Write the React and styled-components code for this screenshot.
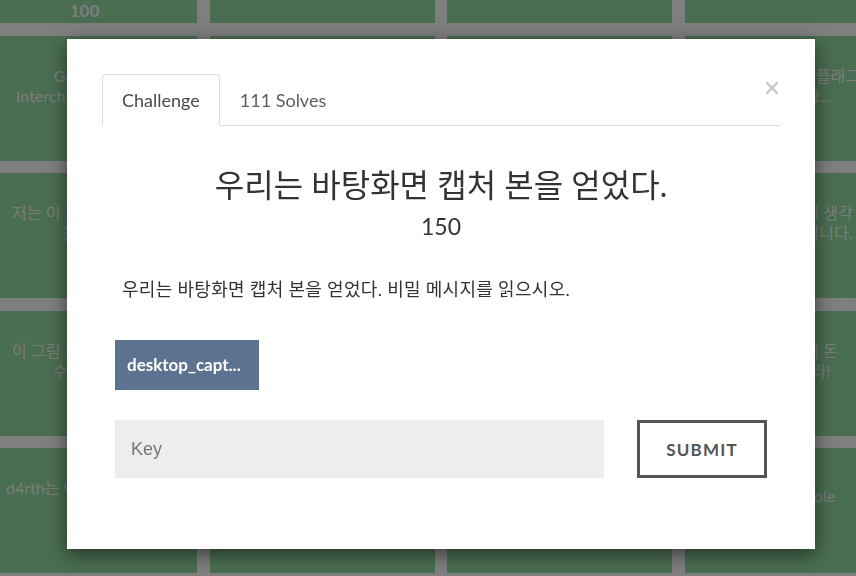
import React from 'react'
import styled, { createGlobalStyle } from 'styled-components'

const GlobalStyle = createGlobalStyle`
  html, body {
    margin: 0;
    padding: 0;
  }
  body {
    width: 856px;
    height: 576px;
    overflow: hidden;
    background: #7f7f7f;
    font-family: Lato, 'Noto Sans CJK KR', sans-serif;
  }
`

const Board = styled.div`
  display: grid;
  grid-template-columns: repeat(4, 225px);
  grid-auto-rows: 125px;
  gap: 12.5px;
  margin: -102px 0 0 -28px;
`

const Tile = styled.div`
  box-sizing: border-box;
  display: flex;
  flex-direction: column;
  align-items: center;
  padding: ${p => (p.low ? '38px' : '30px')} 0 2px;
  background: #4a6e51;
  color: #7d7d7d;
  font-size: 16px;
  line-height: 20px;
  text-align: center;
  white-space: nowrap;
  overflow: hidden;
`

const TileValue = styled.span`
  margin-top: auto;
  font-weight: 700;
  font-size: 17px;
`

const Backdrop = styled.div`
  position: fixed;
  inset: 0;
  display: flex;
  align-items: flex-start;
  padding: 39px 0 0 67px;
`

const Modal = styled.div`
  box-sizing: border-box;
  width: 748px;
  height: 510px;
  padding: 35px 35px 0;
  background: #fff;
  box-shadow: 0 5px 18px rgba(0, 0, 0, 0.55);
`

const Nav = styled.div`
  display: flex;
  align-items: flex-start;
  height: 51px;
  border-bottom: 1px solid #dcdcdc;
`

const Tab = styled.div`
  box-sizing: border-box;
  height: 52px;
  padding: 0 19px;
  border: 1px solid ${p => (p.active ? '#dcdcdc' : 'transparent')};
  border-bottom-color: transparent;
  border-radius: 4px 4px 0 0;
  background: ${p => (p.active ? '#fff' : 'transparent')};
  color: ${p => (p.active ? '#4a4a4a' : '#5e5e5e')};
  font-size: 18px;
  line-height: 50px;
  cursor: pointer;
`

const Close = styled.button`
  margin: 8px 2px 0 auto;
  padding: 0;
  border: none;
  background: none;
  width: 12px;
  height: 12px;
  display: flex;
  cursor: pointer;
`

const Body = styled.div`
  padding: 0 13px;
`

const Title = styled.h3`
  margin: 40px 0 0;
  color: #333;
  font-size: 32px;
  font-weight: 400;
  line-height: 38px;
  text-align: center;
`

const Points = styled.h4`
  margin: 8px 0 0;
  color: #333;
  font-size: 23px;
  font-weight: 400;
  line-height: 28px;
  text-align: center;
`

const Description = styled.p`
  margin: 38px 0 0;
  padding-left: 7px;
  color: #333;
  font-size: 18px;
  line-height: 22px;
  letter-spacing: 0.3px;
`

const FileButton = styled.a`
  box-sizing: border-box;
  display: block;
  width: 144px;
  height: 50px;
  margin-top: 40px;
  padding-left: 12px;
  background: #5c7290;
  color: #fff;
  font-size: 17px;
  font-weight: 700;
  line-height: 50px;
  text-decoration: none;
`

const SubmitRow = styled.form`
  display: flex;
  gap: 33px;
  margin-top: 30px;
`

const KeyInput = styled.input`
  box-sizing: border-box;
  width: 489px;
  height: 58px;
  padding: 0 16px;
  border: none;
  background: #ededed;
  font-family: 'Liberation Sans', Arial, sans-serif;
  font-size: 18px;
  color: #333;
  outline: none;
  &::placeholder {
    color: #777;
  }
`

const SubmitButton = styled.button`
  box-sizing: border-box;
  width: 130px;
  height: 58px;
  border: 3px solid #555;
  background: #fff;
  color: #555;
  font-family: Lato, sans-serif;
  font-size: 17px;
  font-weight: 700;
  letter-spacing: 1.2px;
  text-transform: uppercase;
  cursor: pointer;
`

const tiles = [
  { value: 100 },
  {},
  {},
  {},
  { lines: ['Graphics', 'Interchange Format'] },
  { lines: ['숨겨진 메시지', '찾기'] },
  { lines: ['로그 분석', '기초'] },
  { lines: ['비밀 파일의 플래그', '찾으세요...'] },
  { lines: ['저는 이 문제를 만들며', '울었다'] },
  { lines: ['패킷을 분석하라'] },
  { lines: ['메모리 덤프'] },
  { lines: ['나는 이렇게 생각', '중요한 것입니다.'] },
  { lines: ['이 그림 속에 숨어있는', '수상한 것'] },
  { lines: ['압축 파일'] },
  { lines: ['USB 기록'] },
  { lines: ['돈을 위해 돈', '을 벌어라!'] },
  { lines: ['d4rth는 어디에 있을까?'] },
  { lines: ['웹 콘솔'] },
  { lines: ['레지스트리'] },
  { lines: ['JS Console'], low: true },
]

const App = () => {
  return (
    <>
      <GlobalStyle />
      <Board>
        {tiles.map((t, i) => (
          <Tile key={i} low={t.low}>
            {(t.lines || []).map((l, j) => (
              <div key={j}>{l}</div>
            ))}
            {t.value && <TileValue>{t.value}</TileValue>}
          </Tile>
        ))}
      </Board>

      <Backdrop>
        <Modal>
          <Nav>
            <Tab active>Challenge</Tab>
            <Tab>111 Solves</Tab>
            <Close aria-label="Close">
              <svg width="12" height="12" viewBox="0 0 12 12">
                <path
                  d="M1 1L11 11M11 1L1 11"
                  stroke="#c8c8c8"
                  strokeWidth="2.4"
                  strokeLinecap="round"
                />
              </svg>
            </Close>
          </Nav>

          <Body>
            <Title>우리는 바탕화면 캡처 본을 얻었다.</Title>
            <Points>150</Points>
            <Description>
              우리는 바탕화면 캡처 본을 얻었다. 비밀 메시지를 읽으시오.
            </Description>
            <FileButton href="#">desktop_capt...</FileButton>
            <SubmitRow onSubmit={e => e.preventDefault()}>
              <KeyInput placeholder="Key" />
              <SubmitButton type="submit">Submit</SubmitButton>
            </SubmitRow>
          </Body>
        </Modal>
      </Backdrop>
    </>
  )
}

export default App
